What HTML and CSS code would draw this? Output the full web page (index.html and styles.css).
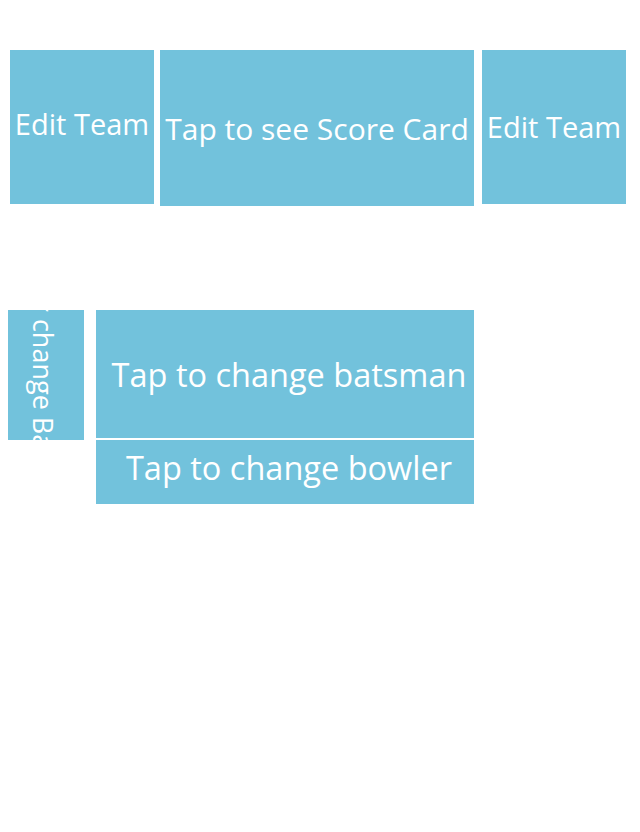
FILE: index.html
```html
<!DOCTYPE html>
<html>
<head>
<meta charset="utf-8">
<link rel="stylesheet" href="styles.css">
</head>
<body>
<div class="top-row">
  <div class="tile tile-team">Edit Team</div>
  <div class="tile tile-score">Tap to see Score Card</div>
  <div class="tile tile-team tile-team-right">Edit Team</div>
</div>
<div class="bottom-row">
  <div class="tile tile-side"><span class="side-label">For change Batsman</span></div>
  <div class="stack">
    <div class="tile tile-batsman">Tap to change batsman</div>
    <div class="tile tile-bowler">Tap to change bowler</div>
  </div>
</div>
</body>
</html>
```

FILE: styles.css
```css
html, body {
  margin: 0;
  padding: 0;
  background: #ffffff;
}

body {
  width: 640px;
  height: 832px;
  font-family: "Open Sans", "DejaVu Sans", sans-serif;
  color: #ffffff;
}

.tile {
  background: #72c2dc;
  display: flex;
  align-items: center;
  justify-content: center;
  white-space: nowrap;
  box-sizing: border-box;
}

.top-row {
  display: flex;
  align-items: flex-start;
  padding: 50px 0 0 10px;
}

.tile-team {
  width: 144px;
  height: 154px;
  font-size: 29px;
  padding-bottom: 8px;
}

.tile-team-right {
  margin-left: 8px;
  padding-bottom: 2px;
}

.tile-score {
  width: 314px;
  height: 156px;
  margin-left: 6px;
  font-size: 30px;
}

.bottom-row {
  display: flex;
  align-items: flex-start;
  padding: 104px 0 0 8px;
}

.tile-side {
  width: 76px;
  height: 130px;
  overflow: visible;
}

.side-label {
  display: block;
  transform: translate(-2px, 24px) rotate(90deg);
  font-size: 27px;
  line-height: 1;
  white-space: nowrap;
}

.stack {
  display: flex;
  flex-direction: column;
  gap: 2px;
  margin-left: 12px;
}

.tile-batsman {
  width: 378px;
  height: 128px;
  font-size: 32.5px;
  padding-left: 8px;
}

.tile-bowler {
  width: 378px;
  height: 64px;
  font-size: 32.5px;
  padding: 0 0 10px 8px;
}
```
